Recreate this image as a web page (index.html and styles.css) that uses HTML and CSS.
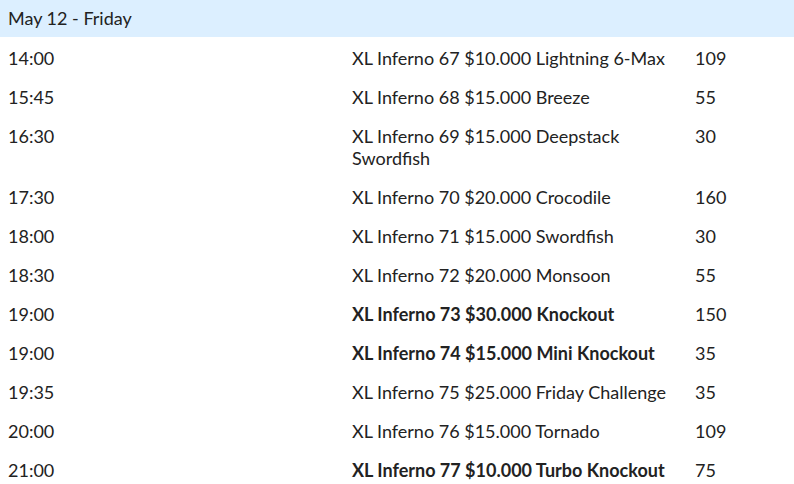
FILE: index.html
```html
<!DOCTYPE html>
<html>
<head>
<meta charset="utf-8">
<link rel="stylesheet" href="styles.css">
</head>
<body>
<div class="day">May 12 - Friday</div>
<table class="sched">
<colgroup><col class="c-time"><col class="c-name"><col class="c-num"></colgroup>
<tr><td>14:00</td><td>XL Inferno 67 $10.000 Lightning 6-Max</td><td>109</td></tr>
<tr><td>15:45</td><td>XL Inferno 68 $15.000 Breeze</td><td>55</td></tr>
<tr><td>16:30</td><td>XL Inferno 69 $15.000 Deepstack Swordfish</td><td>30</td></tr>
<tr><td>17:30</td><td>XL Inferno 70 $20.000 Crocodile</td><td>160</td></tr>
<tr><td>18:00</td><td>XL Inferno 71 $15.000 Swordfish</td><td>30</td></tr>
<tr><td>18:30</td><td>XL Inferno 72 $20.000 Monsoon</td><td>55</td></tr>
<tr><td>19:00</td><td class="b">XL Inferno 73 $30.000 Knockout</td><td>150</td></tr>
<tr><td>19:00</td><td class="b">XL Inferno 74 $15.000 Mini Knockout</td><td>35</td></tr>
<tr><td>19:35</td><td>XL Inferno 75 $25.000 Friday Challenge</td><td>35</td></tr>
<tr><td>20:00</td><td>XL Inferno 76 $15.000 Tornado</td><td>109</td></tr>
<tr><td>21:00</td><td class="b">XL Inferno 77 $10.000 Turbo Knockout</td><td>75</td></tr>
</table>
</body>
</html>
```
FILE: styles.css
```css
body { margin: 0; font-family: Lato, "Open Sans", sans-serif; color: #222; font-size: 18px; }
.day { background: #dcefff; height: 37px; line-height: 37px; padding: 0 8px; }
.sched { width: 794px; border-collapse: collapse; table-layout: fixed; }
.c-time { width: 344px; }
.c-name { width: 343px; }
.c-num { width: 107px; }
.sched td { vertical-align: top; padding: 10px 8px 7px; line-height: 22px; }
.b { font-weight: bold; }
```
